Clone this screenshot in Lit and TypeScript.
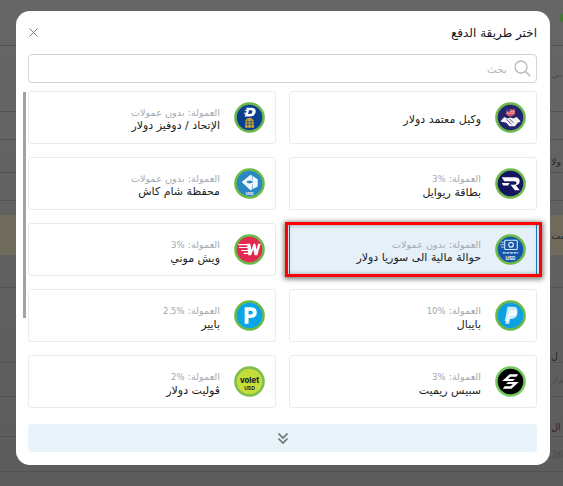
import { LitElement, html, css, svg } from "lit";
import { customElement } from "lit/decorators.js";

const NO_FEE = "بدون عمولات";
type Item = { name: string; fee?: string; pct?: boolean; icon: string; sel?: boolean };
const items: Item[] = [
  { name: "وكيل معتمد دولار", icon: "agent" },
  { name: "الإتحاد / دوفيز دولار", fee: NO_FEE, icon: "d" },
  { name: "بطاقة ريوايل", fee: "3%", pct: true, icon: "r" },
  { name: "محفظة شام كاش", fee: NO_FEE, icon: "sham" },
  { name: "حوالة مالية الى سوريا دولار", fee: NO_FEE, icon: "hawala", sel: true },
  { name: "ويش موني", fee: "3%", pct: true, icon: "wish" },
  { name: "بايبال", fee: "10%", pct: true, icon: "paypal" },
  { name: "بايير", fee: "2.5%", pct: true, icon: "payeer" },
  { name: "سبيس ريميت", fee: "3%", pct: true, icon: "space" },
  { name: "ڤوليت دولار", fee: "2%", pct: true, icon: "volet" },
];

type Row = { h: number; line?: boolean; text?: string; gray?: boolean; tan?: boolean };
const rows: Row[] = [
  { h: 46, line: true },
  { h: 54, text: "ـي", gray: true },
  { h: 12, line: true },
  { h: 28, line: true },
  { h: 10 },
  { h: 23, text: "ولا", line: true },
  { h: 28, line: true },
  { h: 14 },
  { h: 40, text: "ست", tan: true },
  { h: 33, line: true },
  { h: 60 },
  { h: 15, text: "ل", line: true },
  { h: 34, text: "ماز", gray: true, line: true },
  { h: 20 },
  { h: 20, text: "ال", line: true },
  { h: 35, text: "36", gray: true, line: true },
  { h: 14 },
];

const ring = (fill: string, body: unknown, stroke = "#6cb94a") => svg`
  <circle cx="16" cy="16" r="14.500" fill="${fill}" stroke="${stroke}" stroke-width="2.600"/>${body}`;

const icons: Record<string, unknown> = {
  agent: ring("#23246f", svg`<path d="M11.500 7.500h9v5q-1.500 2.500-4.500 2.500t-4.500-2.500z" fill="#d8505f"/><path d="M11.500 9.500h9M11.500 11.500h9" stroke="#f3dfe0" stroke-width=".7"/><rect x="11.500" y="7" width="4" height="3" fill="#2b3a8c"/><path d="M5.500 20l4-4.500 3.500 1.500 3-1 3 1 3.500-1.500 4 4.500-3 1.500-3 3.500h-3.500l-2 0-3.500-3.500z" fill="#f4f4f8"/><path d="M12 18l3.500 3.500M15 17.500l4 4M17 23l-2-2" stroke="#23246f" stroke-width=".8" fill="none"/>`),
  d: ring("#0b3f8f", svg`<path d="M12.500 6h5.500q5.500.5 4.200 4.800-1.200 4-5.700 4.200h-5.500l1-3h-2l.4-1h2l.6-2h-2l.4-1h2zM15.500 8.500l-1 4h1.800q2.500-.3 2.700-2.300.2-1.700-1.500-1.700z" fill="#fff" fill-rule="evenodd"/><path d="M11.500 22q0-5.500 4.500-5.500t4.500 5.500v4.500h-9z" fill="#dcae2e"/><path d="M11 20.500h10M11 23h10M14.300 18v8.500M17.700 18v8.500" stroke="#0b3f8f" stroke-width=".7"/>`),
  r: ring("#14175f", svg`<path d="M7 9.500h13.500q5 0 5 4t-4 4.200l4 5.300h-5l-4.500-5.800h4q2.300 0 2.300-1.700t-2.300-1.800H9.500z" fill="#fff"/><path d="M7 15.500h8l-1.500 2.500H8.500z" fill="#fff"/>`),
  sham: ring("#2a87c2", svg`<path d="M8 14.500L17 7l7.500 4.500v7.500L17 23z" fill="#f2f8fc"/><path d="M12.500 14.500q3.500-3 7.500 0-4 3-7.500 0z" fill="#2a87c2"/><path d="M19 8.300v4M19 17v4.500" stroke="#2a87c2" stroke-width=".6"/><text x="16" y="27.600" font-size="3.800" fill="#fff" text-anchor="middle" font-family="Inter" font-weight="700">USD</text>`),
  hawala: ring("#1556a8", svg`<rect x="10" y="6.500" width="13" height="9.500" rx="1" fill="none" stroke="#d6eafa" stroke-width="1.100"/><circle cx="16.500" cy="11.200" r="2.400" fill="none" stroke="#fff" stroke-width="1.100"/><path d="M6 8.500h4M5.500 11h4M6 13.500h4" stroke="#d6eafa" stroke-width=".8"/><path d="M8 19.500h16" stroke="#dcecf8" stroke-width="1.200" stroke-dasharray="3 .7"/><text x="16" y="26.500" font-size="4.800" fill="#fff" text-anchor="middle" font-family="Inter" font-weight="700">USD</text>`),
  wish: ring("#e2294f", svg`<path d="M13.500 10h3.300l1.200 6.200 2.200-6.200h1.800l1.300 6.200 1.600-6.200h2.600l-3.400 12h-2.800l-1.400-6-2.300 6h-2.800z" fill="#fff"/><path d="M4.500 11h10M5 14h10.500M7.500 17h8.500M10 20h6" stroke="#fff" stroke-width="1.100"/>`),
  paypal: ring("#109fe0", svg`<path d="M13 7h6q5 .5 4 5t-6 4.500h-2l-1 5.500h-4z" fill="#cdeafb"/><path d="M15.500 10.500h5q3.500.5 2.500 4.500t-6 4.500h-1.500l-1 5h-4z" fill="#fff" opacity=".8"/>`),
  payeer: ring("#08a5e8", svg`<path d="M11 7.500h6.500q6 0 6 5.500t-6 5.500H15v6h-4zM15 11v4h2.300q2.200 0 2.200-2t-2.200-2z" fill="#fff" fill-rule="evenodd"/>`),
  space: ring("#000", svg`<path d="M15 8.500h9l-2 2.500h-6l-2.500 2.500h7l-2 2H7.500z" fill="#fff"/><path d="M17 23.500H8l2-2.500h6l2.500-2.500h-7l2-2H24.500z" fill="#fff"/>`, "#72c95d"),
  volet: ring("#c3dd3a", svg`<text x="16" y="17.500" font-size="8" font-weight="800" fill="#1d2a25" text-anchor="middle" font-family="Inter">volet</text><text x="16" y="24.500" font-size="5.200" font-weight="700" fill="#1d2a25" text-anchor="middle" font-family="Inter">USD</text>`, "#7fbe4e"),
};

@customElement("app-root")
export class AppRoot extends LitElement {
  static styles = css`
    :host { display: block; width: 563px; height: 486px; overflow: hidden; font-family: "DejaVu Sans", sans-serif; }
    .page { width: 563px; height: 486px; background: linear-gradient(#666, #5c5c5c); position: relative; overflow: hidden; }
    .bg { display: flex; flex-direction: column; }
    .row { box-sizing: border-box; display: flex; align-items: center; padding-left: 551px; white-space: nowrap; font-size: 9.500px; color: #262626; }
    .row.line { border-bottom: 1px solid #535353; }
    .row.gray { color: #4a4a4a; }
    .row.tan { background: #6f6b5d; }
    .dot { position: absolute; left: 560px; top: 13px; width: 10px; height: 10px; border-radius: 50%; background: #3f7a2c; }
    .modal { position: absolute; left: 16px; top: 11px; width: 534px; height: 454px; background: #fff; border-radius: 14px; box-sizing: border-box; padding: 0 13px 0 12px; display: flex; flex-direction: column; }
    .head { height: 43px; display: flex; align-items: center; justify-content: space-between; }
    .title { font-size: 12px; color: #14171c; }
    .close { width: 9px; height: 9px; margin-left: 1px; }
    .search { height: 29px; box-sizing: border-box; border: 1px solid #ced4da; border-radius: 4px; display: flex; align-items: center; padding: 0 5px; gap: 7px; }
    .search span { font-size: 10.500px; color: #b3b8bd; }
    .body { position: relative; margin-top: 8px; }
    .track { position: absolute; left: -5px; top: 1px; width: 3px; height: 226px; background: #a2a2a2; }
    .grid { display: grid; grid-template-columns: repeat(2, 248px); column-gap: 13px; row-gap: 13px; direction: rtl; }
    .card { height: 53px; box-sizing: border-box; border: 1px solid #e9ecef; border-radius: 3px; display: flex; align-items: center; gap: 14px; padding: 0 10px 0 0; direction: rtl; background: #fff; }
    .card.sel { background: #e5f0f9; border: 0; border-left: 1px solid #1976d2; border-right: 1px solid #1976d2; border-radius: 0; position: relative; }
    .card.sel::after { content: ""; position: absolute; inset: -1px -6px -1px -5px; border: 3px solid #f00; box-shadow: 0 1px 5px 1px rgba(0,0,0,.55), inset 0 0 4px rgba(0,0,0,.35); pointer-events: none; }
    .icon { width: 31px; height: 31px; flex: none; display: block; }
    .text { display: flex; flex-direction: column; padding-top: 4px; }
    .fee { font-size: 9.700px; line-height: 13px; color: #a3a8ad; }
    .fee bdi { font-size: 8.500px; }
    .name { font-size: 11px; line-height: 14px; color: #1a1d21; }
    .more { height: 28px; margin-top: 16px; background: #e8f3f9; border-radius: 4px; display: flex; align-items: center; justify-content: center; }
  `;

  render() {
    return html`<div class="page">
      <div class="bg">
        ${rows.map((r) => html`<div class="row ${r.line ? "line" : ""} ${r.gray ? "gray" : ""} ${r.tan ? "tan" : ""}" style="height:${r.h}px">${r.text ?? ""}</div>`)}
      </div>
      <div class="dot"></div>
      <div class="modal">
        <div class="head" dir="ltr">
          <svg class="close" viewBox="0 0 9 9"><path d="M.5.5l8 8M8.500.5l-8 8" stroke="#7a7f85" stroke-width="1" fill="none"/></svg>
          <div class="title" dir="rtl">اختر طريقة الدفع</div>
        </div>
        <div class="search" dir="rtl">
          <svg width="17" height="17" viewBox="0 0 17 17"><circle cx="7" cy="7" r="6" fill="none" stroke="#b4b9be" stroke-width="1.300"/><path d="M11.300 11.300l5 5" stroke="#b4b9be" stroke-width="1.500"/></svg>
          <span>بحث</span>
        </div>
        <div class="body">
          <div class="track"></div>
          <div class="grid">
            ${items.map((it) => html`<div class="card ${it.sel ? "sel" : ""}">
              <svg class="icon" viewBox="0 0 32 32">${icons[it.icon]}</svg>
              <div class="text">
                ${it.fee ? html`<div class="fee">العمولة: ${it.pct ? html`<bdi dir="ltr">${it.fee}</bdi>` : it.fee}</div>` : ""}
                <div class="name">${it.name}</div>
              </div>
            </div>`)}
          </div>
        </div>
        <div class="more">
          <svg width="12" height="13" viewBox="0 0 12 13"><path d="M1.500 1.500L6 6l4.500-4.500M1.500 6.500L6 11l4.500-4.500" fill="none" stroke="#6d7278" stroke-width="1.700"/></svg>
        </div>
      </div>
    </div>`;
  }
}
